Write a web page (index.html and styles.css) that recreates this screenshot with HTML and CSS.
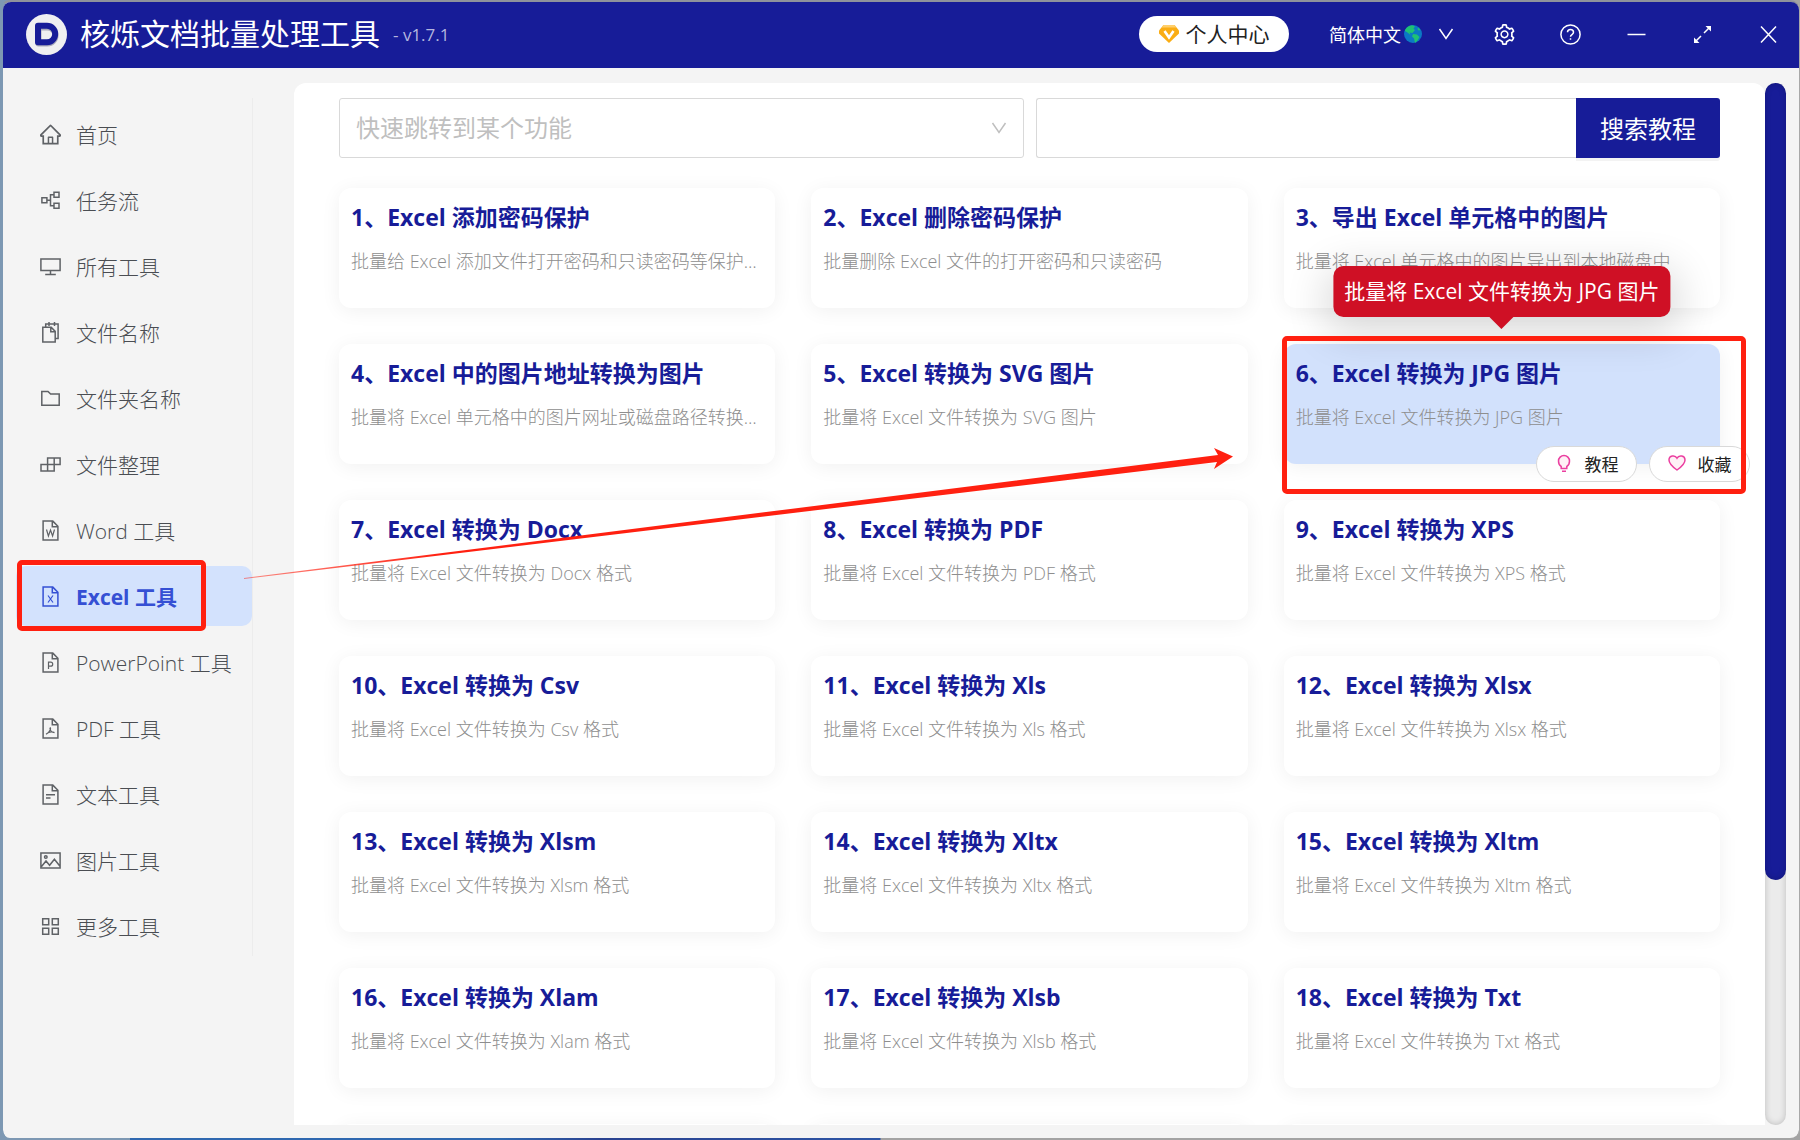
FILE: index.html
```html
<!DOCTYPE html>
<html lang="zh-CN">
<head>
<meta charset="utf-8">
<title>核烁文档批量处理工具</title>
<link rel="stylesheet" href="styles.css">
</head>
<body>
<svg class="sprite" aria-hidden="true">
  <symbol id="file" viewBox="0 0 21 21"><path d="M12.8 1.1H3.1v18.8h14.8V6.2zM12.3 1.3v5.4h5.4"/></symbol>
  <symbol id="chevron" viewBox="0 0 16 16"><path d="M1.5 3 8 12.5 14.500 3"/></symbol>
</svg>
<div class="app">
  <header class="topbar">
    <svg class="logo" viewBox="0 0 41 41" aria-hidden="true"><circle cx="20.500" cy="20.500" r="20.500" fill="#efeff1" stroke="none"/><path d="M12.500 13.500h9a8 8 0 0 1 0 16h-9z" fill="none" stroke="#a9a9ba" stroke-width="6" stroke-linejoin="round"/><path d="M12 11.800h9a8 8 0 0 1 0 16.400h-9z" fill="none" stroke="#171c98" stroke-width="6" stroke-linejoin="round"/></svg>
    <h1 class="app-name">核烁文档批量处理工具</h1>
    <span class="version">- v1.7.1</span>
    <button class="account" type="button">
      <svg viewBox="0 0 20 20" aria-hidden="true"><g stroke="none"><path d="M4.500 1h11L20 6.500v3L10 19 0 9.500v-3z" fill="#faad14"/><path d="M4.500 1h11l2 2.500h-15z" fill="#ffcf6b"/></g><path d="m5.500 7 4.500 6.500L14.500 7" fill="none" stroke="#fff" stroke-width="2.600"/></svg>
      个人中心
    </button>
    <button class="language" type="button">
      简体中文
      <svg class="globe" viewBox="0 0 18 18" aria-hidden="true"><g stroke="none"><circle cx="9" cy="9" r="9" fill="#0b78c4"/><path d="M1 5Q3 1 8 .2l3 1-1.500 2.500L11 5 8.500 8l-3-.5 1 2.500-3-2.500L1 6zM9 9l4 .5 2.500 2.500-2 3.500L11 18l-1-4.500-2-2zM14 2.500l2.500 2.500-2 .5-1-1.500z" fill="#1fc174"/></g></svg>
      <svg class="caret" aria-hidden="true"><use href="#chevron"/></svg>
    </button>
    <button class="tool" type="button" aria-label="设置"><svg class="solid" viewBox="64 64 896 896"><path d="M924.8 625.7l-65.5-56c3.1-19 4.7-38.4 4.7-57.8s-1.6-38.8-4.7-57.8l65.5-56a32.03 32.03 0 009.3-35.2l-.9-2.6a443.74 443.74 0 00-79.7-137.900l-1.800-2.100a32.120 32.120 0 00-35.100-9.500l-81.300 28.900c-30-24.600-63.500-44-99.700-57.600l-15.700-85a32.050 32.050 0 00-25.800-25.700l-2.700-.5c-52.100-9.400-106.900-9.400-159 0l-2.700.5a32.050 32.050 0 00-25.800 25.700l-15.800 85.400a351.860 351.860 0 00-99 57.400l-81.900-29.100a32 32 0 00-35.100 9.500l-1.800 2.100a446.020 446.020 0 00-79.700 137.900l-.9 2.600c-4.500 12.500-.8 26.500 9.300 35.200l66.300 56.600c-3.100 18.800-4.600 38-4.600 57.100 0 19.200 1.500 38.400 4.600 57.100L99 625.500a32.030 32.030 0 00-9.300 35.200l.9 2.600c18.100 50.400 44.900 96.900 79.700 137.900l1.800 2.100a32.120 32.120 0 0035.100 9.500l81.900-29.100c29.800 24.500 63.100 43.900 99 57.400l15.800 85.400a32.050 32.050 0 0025.800 25.700l2.700.5a449.400 449.400 0 00159 0l2.700-.5a32.050 32.050 0 0025.800-25.700l15.700-85a350 350 0 0099.700-57.600l81.300 28.900a32 32 0 0035.100-9.500l1.800-2.100c34.800-41.100 61.600-87.500 79.700-137.900l.9-2.600c4.500-12.300.8-26.300-9.300-35zM788.300 465.900c2.500 15.100 3.800 30.600 3.800 46.100s-1.300 31-3.800 46.100l-6.600 40.100 74.700 63.900a370.030 370.030 0 01-42.600 73.600L721 702.800l-31.400 25.800c-23.900 19.600-50.500 35-79.300 45.800l-38.100 14.300-17.900 97a377.500 377.500 0 01-85 0l-17.900-97.200-37.800-14.500c-28.500-10.800-55-26.200-78.700-45.700l-31.400-25.900-93.400 33.200c-17-22.900-31.200-47.600-42.600-73.600l75.500-64.500-6.500-40c-2.400-14.900-3.700-30.300-3.700-45.500 0-15.300 1.200-30.600 3.700-45.500l6.500-40-75.500-64.500c11.300-26.100 25.600-50.700 42.600-73.600l93.400 33.200 31.400-25.900c23.700-19.500 50.200-34.900 78.700-45.700l37.900-14.300 17.900-97.200c28.100-3.200 56.800-3.200 85 0l17.900 97 38.100 14.300c28.700 10.800 55.400 26.200 79.300 45.800l31.400 25.800 92.800-32.900c17 22.900 31.200 47.600 42.600 73.600L781.800 426l6.500 39.900zM512 326c-97.200 0-176 78.800-176 176s78.800 176 176 176 176-78.800 176-176-78.800-176-176-176zm79.200 255.200A111.600 111.600 0 01512 614c-29.900 0-58-11.700-79.200-32.800A111.600 111.600 0 01400 502c0-29.900 11.700-58 32.800-79.200C454 401.600 482.100 390 512 390c29.900 0 58 11.600 79.200 32.800A111.600 111.600 0 01624 502c0 29.900-11.700 58-32.800 79.200z"/></svg></button>
    <button class="tool" type="button" aria-label="帮助"><svg viewBox="0 0 21 21"><circle cx="10.500" cy="10.500" r="9.600"/><path d="M7.500 8.300c0-3.800 6-3.800 6 0 0 2.300-3 2.200-3 4.400M10.500 14.200v1.600"/></svg></button>
    <button class="tool" type="button" aria-label="最小化"><svg viewBox="0 0 21 21"><path d="M1.500 10.500h18"/></svg></button>
    <button class="tool" type="button" aria-label="最大化"><svg viewBox="0 0 21 21"><path d="m17.500 3.500-5.500 5.500M9 12l-5.500 5.500"/><path class="fill" d="M19 2v5.500L13.500 2zM2 19v-5.500L7.500 19z"/></svg></button>
    <button class="tool" type="button" aria-label="关闭"><svg viewBox="0 0 21 21"><path d="m3 2.500 15 16M18 2.500l-15 16"/></svg></button>
  </header>

  <div class="body">
    <nav class="sidebar" aria-label="工具分类">
      <a href="#home"><svg class="solid" viewBox="64 64 896 896"><path d="M946.500 505L560.100 118.800l-25.900-25.900a31.500 31.500 0 00-44.400 0L77.500 505a63.900 63.900 0 00-18.800 46c.4 35.200 29.700 63.300 64.900 63.300h42.500V940h691.800V614.300h43.400c17.100 0 33.200-6.700 45.300-18.800a63.600 63.600 0 0018.700-45.300c0-17-6.700-33.100-18.800-45.200zM568 868H456V664h112v204zm217.900-325.700V868H632V640c0-22.100-17.900-40-40-40H432c-22.100 0-40 17.900-40 40v228H238.100V542.300h-96l370-369.700 23.100 23.100L882 542.300h-96.100z"/></svg>首页</a>
      <a href="#flow"><svg viewBox="0 0 21 21"><path d="M1.900 7.700h5v5h-5zM14 2.200h5v5h-5zM14 13.200h5v5h-5zM6.900 10.200h3.500M14 4.700h-3.500v11H14"/></svg>任务流</a>
      <a href="#all"><svg viewBox="0 0 21 21"><path d="M.9 2.900h19.200v11.600H.9zM10.500 14.500v4M5.200 18.400h10.600"/></svg>所有工具</a>
      <a href="#names"><svg viewBox="0 0 21 21"><path d="M2.800 5.200h8.400l4 4.200v10.600H2.800zM10.800 5.400v4.400h4.200M5.700 5V2h12.400v14.500h-2.500M9 0v4M14.500 0v4"/></svg>文件名称</a>
      <a href="#folders"><svg viewBox="0 0 21 21"><path d="M1.800 3.500h6.200l2.600 2.600h8.600v11.200H1.800z"/></svg>文件夹名称</a>
      <a href="#arrange"><svg viewBox="0 0 21 21"><path d="M1 10.500h13.200v6.500H1zM7.600 4h12.500v6.500H7.600zM7.600 10.500V17M14.200 4v6.500"/></svg>文件整理</a>
      <a href="#word"><svg viewBox="0 0 21 21"><use href="#file"/><path class="thin" d="m6.500 9.500 1.900 6.500 2.100-6 2.100 6 1.900-6.500"/></svg>Word 工具</a>
      <a href="#excel" class="active" aria-current="page"><svg viewBox="0 0 21 21"><use href="#file"/><path class="thin" d="m8 9.500 5 7M13 9.500l-5 7"/></svg>Excel 工具<span class="mark mark-nav"></span></a>
      <a href="#ppt"><svg viewBox="0 0 21 21"><use href="#file"/><path class="thin" d="M8.500 17v-6.800h2.200a2 2 0 0 1 0 4H8.500"/></svg>PowerPoint 工具</a>
      <a href="#pdf"><svg viewBox="0 0 21 21"><use href="#file"/><path class="thin" d="M9.800 9.500c1.600 0 .6 4.500-3.800 6.800M9.900 10c.3 3 1.800 4.500 4.600 4.700M8 14.800c2-1 4.500-1.200 6.500-.2"/></svg>PDF 工具</a>
      <a href="#text"><svg viewBox="0 0 21 21"><use href="#file"/><path d="M6 10.700h9M6 14h4.500"/></svg>文本工具</a>
      <a href="#image"><svg viewBox="0 0 21 21"><path d="M.9 3h19.200v15H.9zM1.500 16.500l4.500-5.500 3.600 4.200 4.800-6 5.400 6.800"/><circle cx="5.800" cy="7" r="1.300"/></svg>图片工具</a>
      <a href="#more"><svg viewBox="0 0 21 21"><path d="M2.700 2.700h6v6h-6zM12.300 2.700h6v6h-6zM2.700 12.300h6v6h-6zM12.300 12.300h6v6h-6z"/></svg>更多工具</a>
    </nav>

    <main class="panel">
      <div class="search-row">
        <div class="jump">
          <select aria-label="快速跳转到某个功能"><option>快速跳转到某个功能</option></select>
          <svg aria-hidden="true"><use href="#chevron"/></svg>
        </div>
        <form class="search">
          <input type="text" aria-label="搜索教程">
          <button type="button">搜索教程</button>
        </form>
      </div>

      <div class="cards">
        <article class="card"><h2>1、Excel 添加密码保护</h2><p>批量给 Excel 添加文件打开密码和只读密码等保护，防止他人查看</p></article>
        <article class="card"><h2>2、Excel 删除密码保护</h2><p>批量删除 Excel 文件的打开密码和只读密码</p></article>
        <article class="card"><h2>3、导出 Excel 单元格中的图片</h2><p>批量将 Excel 单元格中的图片导出到本地磁盘中</p></article>
        <article class="card"><h2>4、Excel 中的图片地址转换为图片</h2><p>批量将 Excel 单元格中的图片网址或磁盘路径转换为图片文件</p></article>
        <article class="card"><h2>5、Excel 转换为 SVG 图片</h2><p>批量将 Excel 文件转换为 SVG 图片</p></article>
        <article class="card hovered">
          <h2>6、Excel 转换为 JPG 图片</h2><p>批量将 Excel 文件转换为 JPG 图片</p>
          <div class="tooltip" role="tooltip">批量将 Excel 文件转换为 JPG 图片</div>
          <div class="actions">
            <button type="button"><svg viewBox="0 0 18 18" aria-hidden="true"><path d="M6.200 12.500C4.500 11.500 3.500 9.500 3.500 7a5.500 5.500 0 0 1 11 0c0 2.500-1 4.500-2.700 5.500v2H6.200zM7 17.200h4"/></svg>教程</button>
            <button type="button"><svg viewBox="0 0 18 18" aria-hidden="true"><path d="M9 16C4 12.500 1 9.500 1 6c0-4.500 6-5.500 8-1.800C11 .5 17 1.500 17 6c0 3.500-3 6.500-8 10z"/></svg>收藏</button>
          </div>
          <span class="mark mark-card"></span>
        </article>
        <article class="card"><h2>7、Excel 转换为 Docx</h2><p>批量将 Excel 文件转换为 Docx 格式</p></article>
        <article class="card"><h2>8、Excel 转换为 PDF</h2><p>批量将 Excel 文件转换为 PDF 格式</p></article>
        <article class="card"><h2>9、Excel 转换为 XPS</h2><p>批量将 Excel 文件转换为 XPS 格式</p></article>
        <article class="card"><h2>10、Excel 转换为 Csv</h2><p>批量将 Excel 文件转换为 Csv 格式</p></article>
        <article class="card"><h2>11、Excel 转换为 Xls</h2><p>批量将 Excel 文件转换为 Xls 格式</p></article>
        <article class="card"><h2>12、Excel 转换为 Xlsx</h2><p>批量将 Excel 文件转换为 Xlsx 格式</p></article>
        <article class="card"><h2>13、Excel 转换为 Xlsm</h2><p>批量将 Excel 文件转换为 Xlsm 格式</p></article>
        <article class="card"><h2>14、Excel 转换为 Xltx</h2><p>批量将 Excel 文件转换为 Xltx 格式</p></article>
        <article class="card"><h2>15、Excel 转换为 Xltm</h2><p>批量将 Excel 文件转换为 Xltm 格式</p></article>
        <article class="card"><h2>16、Excel 转换为 Xlam</h2><p>批量将 Excel 文件转换为 Xlam 格式</p></article>
        <article class="card"><h2>17、Excel 转换为 Xlsb</h2><p>批量将 Excel 文件转换为 Xlsb 格式</p></article>
        <article class="card"><h2>18、Excel 转换为 Txt</h2><p>批量将 Excel 文件转换为 Txt 格式</p></article>
        <div class="card"></div>
        <div class="card"></div>
        <div class="card"></div>
      </div>
    </main>
    <div class="scrollbar" aria-hidden="true"><div class="thumb"></div></div>
  </div>

  <svg class="arrow" viewBox="0 0 992 134" aria-hidden="true">
    <defs><linearGradient id="fade"><stop offset="0" stop-color="#ff2010" stop-opacity=".5"/><stop offset=".2" stop-color="#ff2010"/></linearGradient></defs>
    <path d="M0 131v1L973 15l-3 7 19-12.500L970 1l4 7z" fill="url(#fade)"/>
  </svg>
</div>
</body>
</html>
```
FILE: styles.css
```css
* { box-sizing: border-box; }

:root {
  --navy: #171c98;
  --grey-bg: #f4f4f4;
  --mark: #ff2010;
}

body {
  margin: 0;
  font-family: "Open Sans", "Noto Sans CJK SC", sans-serif;
  background: linear-gradient(90deg, #7d98b3 0 130px, #2f68b0 130px 500px, #2a4290 600px, #2d55a5 880px, #a3a3a3 881px);
}

button, input, select { font: inherit; margin: 0; }
button { border: 0; background: none; padding: 0; cursor: pointer; }
h1, h2, p { margin: 0; font-weight: 400; }
.sprite { position: absolute; width: 0; height: 0; }

.app {
  position: relative;
  display: flex;
  flex-direction: column;
  height: 100vh;
  border: solid;
  border-width: 2px 1px 2px 3px;
  border-color: #8f929c #a8a8a8 transparent #7d98b3;
  border-radius: 10px;
  background: var(--grey-bg) padding-box;
}

/* Title bar */
.topbar {
  flex: none;
  display: flex;
  align-items: center;
  height: 66px;
  padding: 0 20px 2px 23px;
  border-radius: 8px 8px 0 0;
  background: var(--navy);
  color: #fff;
}
.logo { width: 41px; height: 41px; margin-right: 13px; }
.app-name { font-size: 30px; line-height: 44px; }
.version { margin: 0 auto 0 13px; font-size: 17px; color: #b4b6df; }
.account {
  display: flex;
  align-items: center;
  justify-content: center;
  gap: 7px;
  width: 150px;
  height: 36px;
  margin-right: 40px;
  border-radius: 18px;
  background: #fff;
  color: #222;
  font-size: 21px;
  line-height: 32px;
}
.account svg { width: 20px; height: 20px; }
.language {
  display: flex;
  align-items: center;
  margin-right: 18px;
  color: inherit;
  font-size: 18px;
}
.globe { width: 18px; height: 18px; margin: 0 16px 0 3px; }
.caret { width: 16px; height: 16px; }
.tool {
  display: grid;
  place-items: center;
  width: 21px;
  height: 36px;
  margin-left: 45px;
  color: inherit;
}
.language + .tool { margin-left: 22px; }
.tool svg { width: 21px; height: 21px; }

svg { fill: none; stroke: currentColor; stroke-width: 1.5px; }
svg.solid, .fill { fill: currentColor; stroke: none; }
.thin { stroke-width: 1.2px; }

/* Sidebar */
.body {
  flex: 1;
  display: flex;
  align-items: stretch;
  min-height: 0;
  padding: 15px 13px 13px 13px;
}
.sidebar {
  flex: none;
  align-self: flex-start;
  display: flex;
  flex-direction: column;
  gap: 6px;
  width: 237px;
  margin: 15px 41px 0 0;
  padding-top: 6px;
  border-right: 1px solid #ececec;
}
.sidebar a {
  position: relative;
  display: flex;
  align-items: center;
  gap: 15px;
  height: 60px;
  padding-left: 24px;
  border-radius: 10px;
  color: #4a4d52;
  font-size: 21px;
  font-weight: 300;
  text-decoration: none;
}
.sidebar svg { width: 21px; height: 21px; color: #5f6266; }
.sidebar .active { background: #d3e2fd; font-weight: 700; }
.sidebar .active, .sidebar .active svg { color: #3550d4; }

/* Content panel */
.panel {
  flex: 1;
  min-width: 0;
  overflow: hidden;
  padding: 15px 45px 0;
  border-radius: 12px 12px 0 0;
  background: #fff;
}
.search-row {
  display: grid;
  grid-template-columns: 1fr 1fr;
  gap: 12px;
  margin-bottom: 30px;
  font-size: 24px;
}
.jump { position: relative; height: 60px; }
.jump select {
  width: 100%;
  height: 100%;
  padding: 0 16px 2px;
  appearance: none;
  border: 1px solid #d9d9d9;
  border-radius: 3px;
  background: #fff;
  color: #bfbfbf;
}
.jump svg {
  position: absolute;
  right: 17px;
  top: 22px;
  width: 16px;
  height: 16px;
  color: #bfbfbf;
}
.search { display: flex; }
.search input {
  flex: 1;
  min-width: 0;
  padding: 0 17px;
  border: 1px solid #d9d9d9;
  border-right: 0;
  border-radius: 3px 0 0 3px;
}
.search button {
  width: 144px;
  padding-bottom: 2px;
  border-radius: 0 3px 3px 0;
  background: var(--navy);
  box-shadow: 0 3px 0 #f3f3f3;
  color: #fff;
}

.cards {
  display: grid;
  grid-template-columns: repeat(3, minmax(0, 1fr));
  gap: 36px;
}
.card {
  position: relative;
  height: 120px;
  padding: 11px 12px;
  border-radius: 12px;
  background: #fff;
  box-shadow: 0 3px 20px rgba(0, 0, 0, .06);
}
.card h2 {
  margin-bottom: 12px;
  color: var(--navy);
  font-size: 23px;
  font-weight: 700;
  line-height: 36px;
  white-space: nowrap;
}
.card p {
  overflow: hidden;
  padding-right: 6px;
  color: #8e8e8e;
  font-size: 18px;
  font-weight: 300;
  line-height: 28px;
  text-overflow: ellipsis;
  white-space: nowrap;
}
.hovered { z-index: 1; background: #d2e1fc; }

.tooltip {
  position: absolute;
  left: 50%;
  bottom: calc(100% + 27px);
  translate: -50% 0;
  padding: 0 11px;
  border-radius: 10px;
  background: #cf1025;
  box-shadow: 0 10px 40px 8px rgba(0, 0, 0, .14);
  color: #fff;
  font-size: 21px;
  line-height: 51px;
  white-space: nowrap;
}
.tooltip::after {
  content: "";
  position: absolute;
  left: 50%;
  top: 100%;
  translate: -50% 0;
  border: 12px solid transparent;
  border-top-color: #cf1025;
  border-bottom: 0;
}
.actions {
  position: absolute;
  right: -30px;
  bottom: -18px;
  display: flex;
  gap: 12px;
}
.actions button {
  display: flex;
  align-items: center;
  justify-content: center;
  gap: 12px;
  width: 101px;
  height: 36px;
  padding-bottom: 2px;
  border: 1px solid #d9d9d9;
  border-radius: 18px;
  background: #fff;
  color: #222;
  font-size: 17px;
}
.actions svg { width: 18px; height: 18px; color: #eb3fa0; fill: #fff0f6; }

/* Scroll bar */
.scrollbar {
  flex: none;
  width: 21px;
  border-radius: 11px;
  background: #ebebeb;
  box-shadow: inset 0 0 6px rgba(0, 0, 0, .2);
}
.thumb {
  height: 76.5%;
  border-radius: 11px;
  background: var(--navy);
  box-shadow: inset 0 0 6px rgba(0, 0, 0, .2);
}

/* Red guide marks */
.mark {
  position: absolute;
  border: 5px solid var(--mark);
  border-radius: 5px;
  pointer-events: none;
}
.mark-nav { inset: -6px 46px -5px 1px; }
.mark-card { inset: -8px -26px -30px -2px; }
.arrow {
  position: absolute;
  left: 241px;
  top: 445px;
  z-index: 2;
  width: 992px;
  height: 134px;
  stroke: none;
  pointer-events: none;
}
```
